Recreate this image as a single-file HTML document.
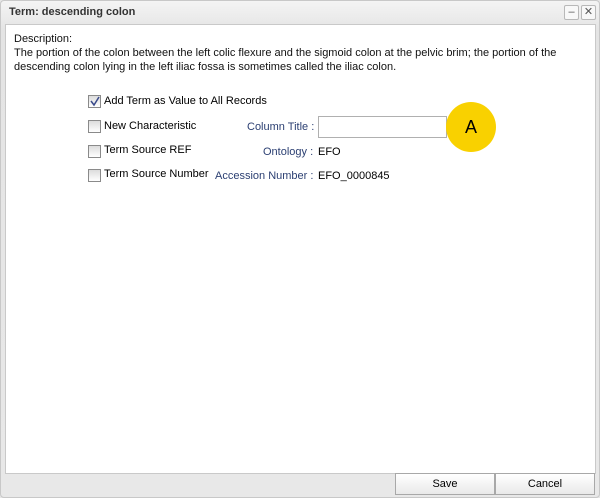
<!DOCTYPE html>
<html><head><style>
body{margin:0;width:600px;height:498px;background:#e6e6e6;font-family:"Liberation Sans",Arial,sans-serif;font-size:11px;color:#000;position:relative;overflow:hidden}
.win{position:absolute;left:0;top:0;width:598px;height:496px;border:1px solid #c8c8c8;border-radius:4px;background:linear-gradient(#f4f4f4,#e4e4e4 30px,#e8e8e8)}
.title{position:absolute;left:8px;top:5px;font-weight:bold;font-size:11px;color:#333}
.tb{position:absolute;top:4px;width:13px;height:13px;border:1px solid #b8b8b8;border-radius:2px;background:#f8f8f8;font-size:11px;line-height:13px;text-align:center;color:#555}
.body{position:absolute;left:4px;top:23px;width:589px;height:448px;background:#fff;border:1px solid #c9c9c9}
.t{position:absolute;white-space:nowrap}
.cb{position:absolute;width:11px;height:11px;border:1px solid #8a8a8a;background:linear-gradient(#dcdcdc,#fff)}
.lbl{color:#2b3f72}
.btn{position:absolute;top:472px;height:20px;border:1px solid #a8a8a8;background:linear-gradient(#fff,#e9e9e9);text-align:center;line-height:20px;font-size:11px}
</style></head><body>
<div class="win">
<div class="title">Term: descending colon</div>
<div class="tb" style="left:563px">–</div>
<div class="tb" style="left:580px">✕</div>
<div class="body">
<div class="t" style="left:8px;top:7px;line-height:14px;color:#111">Description:<br>The portion of the colon between the left colic flexure and the sigmoid colon at the pelvic brim; the portion of the<br>descending colon lying in the left iliac fossa is sometimes called the iliac colon.</div>
<div class="cb" style="left:82px;top:70px"><svg width="11" height="11" style="position:absolute;left:0;top:0"><path d="M2 5 L5 9 L10 1" stroke="#3a4a8a" stroke-width="1.5" fill="none"/></svg></div>
<div class="t" style="left:98px;top:70px">Add Term as Value to All Records</div>
<div class="cb" style="left:82px;top:95px"></div>
<div class="t" style="left:98px;top:95px">New Characteristic</div>
<div class="cb" style="left:82px;top:120px"></div>
<div class="t" style="left:98px;top:119px">Term Source REF</div>
<div class="cb" style="left:82px;top:144px"></div>
<div class="t" style="left:98px;top:143px">Term Source Number</div>
<div class="t lbl" style="left:241px;top:96px">Column Title :</div>
<div style="position:absolute;left:312px;top:91px;width:127px;height:20px;border:1px solid #b0b0b0;background:#fff"></div>
<div class="t lbl" style="left:257px;top:121px">Ontology :</div>
<div class="t" style="left:312px;top:121px">EFO</div>
<div class="t lbl" style="left:209px;top:145px">Accession Number :</div>
<div class="t" style="left:312px;top:145px">EFO_0000845</div>
<div style="position:absolute;left:440px;top:77px;width:50px;height:50px;border-radius:50%;background:#f9d100;text-align:center;line-height:50px;font-size:18px">A</div>
</div>
<div class="btn" style="left:394px;width:98px">Save</div>
<div class="btn" style="left:494px;width:98px">Cancel</div>
</div>
</body></html>
